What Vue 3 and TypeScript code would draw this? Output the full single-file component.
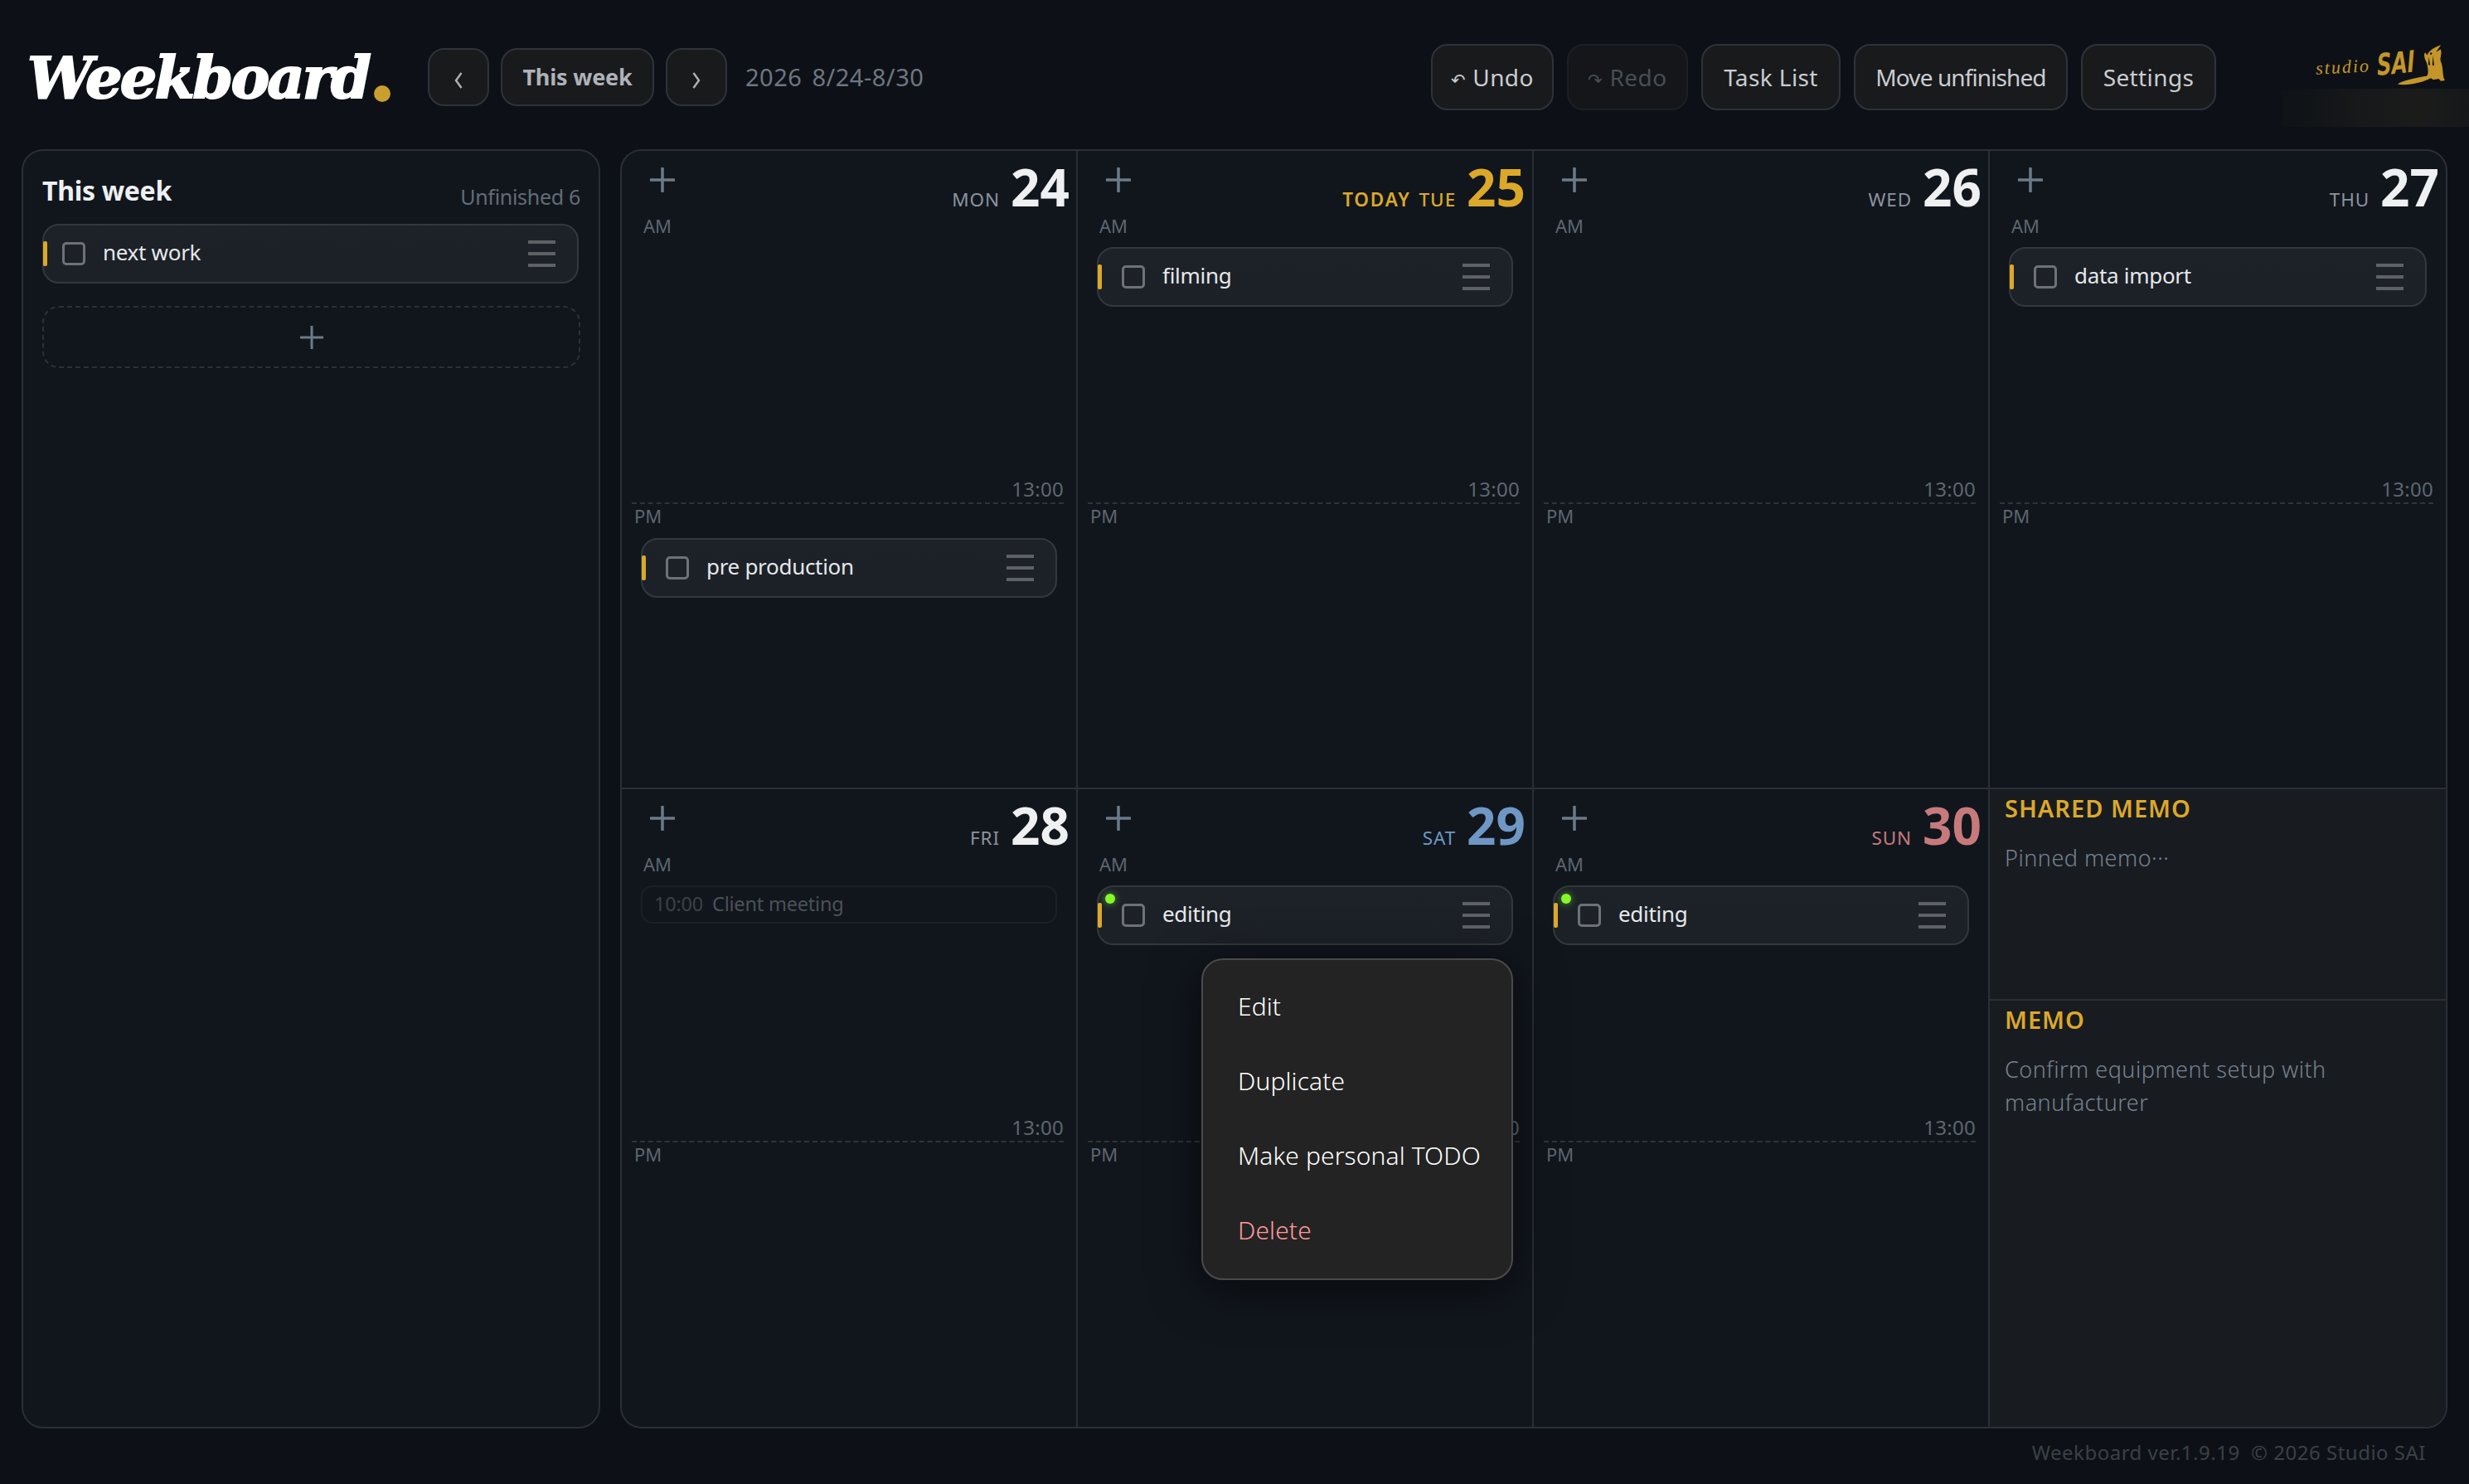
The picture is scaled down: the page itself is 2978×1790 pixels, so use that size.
<script setup lang="ts">
interface Task {
  title: string
  shared?: boolean
}
interface Day {
  dow: string
  num: number
  tone?: 'is-today' | 'sat' | 'sun'
  am: Task[]
  pm: Task[]
  event?: { time: string; title: string }
  menu?: boolean
}

const days: Day[] = [
  { dow: 'MON', num: 24, am: [], pm: [{ title: 'pre production' }] },
  { dow: 'TUE', num: 25, tone: 'is-today', am: [{ title: 'filming' }], pm: [] },
  { dow: 'WED', num: 26, am: [], pm: [] },
  { dow: 'THU', num: 27, am: [{ title: 'data import' }], pm: [] },
  { dow: 'FRI', num: 28, am: [], pm: [], event: { time: '10:00', title: 'Client meeting' } },
  { dow: 'SAT', num: 29, tone: 'sat', am: [{ title: 'editing', shared: true }], pm: [], menu: true },
  { dow: 'SUN', num: 30, tone: 'sun', am: [{ title: 'editing', shared: true }], pm: [] },
]

const menuItems = ['Edit', 'Duplicate', 'Make personal TODO']
</script>

<template>
  <div class="app">
    <header class="topbar">
      <div class="wordmark">Weekboard<i class="wordmark-dot"></i></div>
      <button type="button" class="btn btn-nav" aria-label="Previous week">
        <svg width="10" height="20" viewBox="0 0 10 20"><path d="M8.5 1L2 10l6.5 9" fill="none" stroke="currentColor" stroke-width="2.4" /></svg>
      </button>
      <button type="button" class="btn btn-nav btn-current">This week</button>
      <button type="button" class="btn btn-nav" aria-label="Next week">
        <svg width="10" height="20" viewBox="0 0 10 20"><path d="M1.5 1L8 10l-6.5 9" fill="none" stroke="currentColor" stroke-width="2.4" /></svg>
      </button>
      <span class="range">2026 8/24-8/30</span>

      <div class="actions">
        <button type="button" class="btn btn-undo"><span class="arrow">↶</span> Undo</button>
        <button type="button" class="btn btn-redo"><span class="arrow">↷</span> Redo</button>
        <button type="button" class="btn btn-list">Task List</button>
        <button type="button" class="btn btn-move">Move unfinished</button>
        <button type="button" class="btn btn-settings">Settings</button>
      </div>

      <div class="studio">
        <div class="studio-mark">
          <span class="studio-small">studio</span>
          <span class="studio-big">SAI</span>
          <svg class="studio-animal" viewBox="385 92 182 158" width="59" height="51">
            <path fill="#c4962a" d="M388 243C398 230 440 222 497 211C505 205 500 172 495 160C488 146 484 132 490 124L498 134C502 122 515 108 549 96C541 108 536 116 531 122L548 112C555 126 545 140 548 156C560 180 553 212 564 228L549 231L541 222L521 226L512 220C480 236 430 249 388 243Z" />
            <path fill="#0d1117" d="M504 140l5 32-7-2zM520 136l4 38-7-4zM512 124a4 4 0 1 0 .1 0z" />
          </svg>
        </div>
        <div class="studio-glow"></div>
      </div>
    </header>

    <main class="content">
      <aside class="side">
        <div class="side-head">
          <h2>This week</h2>
          <span>Unfinished 6</span>
        </div>
        <div class="task task-side">
          <i class="task-bar"></i>
          <i class="task-check"></i>
          <span class="task-title">next work</span>
          <i class="task-grip"><b></b><b></b><b></b></i>
        </div>
        <div class="side-add">
          <svg width="30" height="30" viewBox="0 0 30 30"><path d="M15 1v28M1 15h28" stroke="currentColor" stroke-width="3" /></svg>
        </div>
      </aside>

      <section class="board">
        <div v-for="day in days" :key="day.num" class="cell" :class="day.tone">
          <div class="am">
            <div class="head">
              <svg class="add" width="30" height="30" viewBox="0 0 30 30"><path d="M15 1v28M1 15h28" stroke="currentColor" stroke-width="3.5" stroke-linecap="round" /></svg>
              <div class="date">
                <span v-if="day.tone === 'is-today'" class="today">TODAY</span>
                <span class="dow">{{ day.dow }}</span>
                <span class="num">{{ day.num }}</span>
              </div>
            </div>
            <div class="period period-am">AM</div>
            <div class="tasks">
              <div v-if="day.event" class="event"><em>{{ day.event.time }}</em> {{ day.event.title }}</div>
              <div v-for="task in day.am" :key="task.title" class="task">
                <i v-if="task.shared" class="task-dot"></i>
                <i class="task-bar"></i>
                <i class="task-check"></i>
                <span class="task-title">{{ task.title }}</span>
                <i class="task-grip"><b></b><b></b><b></b></i>
              </div>
            </div>
            <div class="noon">13:00</div>
          </div>
          <div class="period period-pm">PM</div>
          <div class="tasks tasks-pm">
            <div v-for="task in day.pm" :key="task.title" class="task">
              <i class="task-bar"></i>
              <i class="task-check"></i>
              <span class="task-title">{{ task.title }}</span>
              <i class="task-grip"><b></b><b></b><b></b></i>
            </div>
          </div>

          <div v-if="day.menu" class="menu">
            <div v-for="item in menuItems" :key="item" class="menu-item">{{ item }}</div>
            <div class="menu-item menu-danger">Delete</div>
          </div>
        </div>

        <div class="cell memos">
          <div class="memo memo-shared">
            <h3>SHARED MEMO</h3>
            <p>Pinned memo···</p>
          </div>
          <div class="memo">
            <h3>MEMO</h3>
            <p>Confirm equipment setup with manufacturer</p>
          </div>
        </div>
      </section>
    </main>

    <footer class="foot">Weekboard ver.1.9.19&nbsp; © 2026 Studio SAI</footer>
  </div>
</template>

<style>
html, body { margin: 0; background: #0d1117; }
</style>

<style scoped>
.app {
  width: 2978px; height: 1790px; overflow: hidden;
  display: flex; flex-direction: column;
  background: #0d1117; color: #c9d1d9;
  font-family: "Noto Sans", sans-serif;
}
.app i { display: block; font-style: normal; }

/* top bar */
.topbar {
  height: 180px; flex-shrink: 0;
  display: flex; align-items: center;
  padding: 0 0 0 33px; box-sizing: border-box;
}
.wordmark {
  display: flex; align-items: flex-end;
  width: 483px; height: 74px; margin-top: 8px;
  font-family: "DejaVu Serif", serif; font-weight: 700; font-style: italic;
  font-size: 70px; line-height: 74px; letter-spacing: -2.8px;
  color: #fff; -webkit-text-stroke: 2px #fff;
}
.app .wordmark-dot {
  width: 20px; height: 20px; border-radius: 50%;
  background: #c99f2e; margin: 0 0 8px 6px;
}
.btn {
  height: 80px; padding: 0; box-sizing: border-box;
  background: #191a1c; color: #c9cdd2;
  border: 2px solid #2e333a; border-radius: 20px;
  font: 400 28px "Noto Sans", sans-serif; letter-spacing: .4px;
}
.btn-nav {
  width: 74px; height: 70px; margin: 5px 14px 0 0;
  color: #aeb3b9;
  display: flex; align-items: center; justify-content: center;
}
.btn-nav svg { margin-top: 8px; }
.btn-current { width: 185px; font-size: 27px; font-weight: 700; letter-spacing: -.2px; }
.range { font-size: 29px; letter-spacing: .5px; word-spacing: 4px; color: #6e7681; margin: 5px 0 0 8px; }
.actions { display: flex; gap: 16px; margin: 6px 0 0 auto; }
.arrow { font-size: 21px; }
.btn-undo { width: 148px; }
.btn-redo { width: 146px; background: #141619; border-color: #1c2025; color: #484e55; }
.btn-list { width: 168px; }
.btn-move { width: 258px; letter-spacing: -.9px; }
.btn-settings { width: 163px; }

.studio { width: 226px; margin-left: 79px; height: 153px; align-self: flex-start; display: flex; flex-direction: column; }
.studio-mark {
  height: 107px; box-sizing: border-box; padding: 50px 0 0 41px;
  display: flex; align-items: center; gap: 8px;
  color: #c4962a;
}
.studio-small { font: italic 400 22px "Liberation Serif", serif; letter-spacing: 2px; transform: rotate(-3deg) translateY(2px); }
.studio-big { font: italic 700 36px "DejaVu Sans", sans-serif; transform: scaleX(.68) rotate(-4deg); transform-origin: left; width: 50px; }
.studio-animal { margin-left: -34px; flex-shrink: 0; }
.studio-glow {
  flex: 1;
  background: linear-gradient(90deg, #0f1216 0, #16181a 40%, #1b1c1a 75%, #15171a 100%);
}

/* main */
.content {
  height: 1543px; flex-shrink: 0;
  display: flex; gap: 24px; padding: 0 26px;
}
.side {
  width: 698px; flex-shrink: 0; box-sizing: border-box;
  background: #11161d; border: 2px solid #2a2f36; border-radius: 26px;
  padding: 0 22px 0 23px;
}
.side-head { height: 88px; display: flex; justify-content: space-between; align-items: flex-end; }
.side-head h2 { margin: 0 0 16px; font-size: 32px; line-height: 48px; font-weight: 700; letter-spacing: -.3px; color: #eef0f2; }
.side-head span { font-size: 25px; line-height: 36px; letter-spacing: -.3px; color: #636c76; margin-bottom: 15px; }
.task-side { width: 647px; height: 73px; }
.side-add {
  height: 75px; margin-top: 27px; box-sizing: border-box;
  border: 2px dashed #2c3138; border-radius: 20px;
  display: flex; align-items: center; justify-content: center;
  color: #6d7a88;
}

.board {
  flex: 1; min-width: 0;
  display: grid; grid-template-columns: repeat(4, minmax(0, 1fr)); grid-template-rows: 770px 1fr;
  background: #11161d; border: 2px solid #2a2f36; border-radius: 26px;
  position: relative; overflow: hidden;
}
.cell {
  position: relative; box-sizing: border-box;
  border-right: 2px solid #2a2f36; border-bottom: 2px solid #2a2f36;
  display: flex; flex-direction: column;
}
.cell:nth-child(4n) { border-right: 0; }
.cell:nth-child(n+5) { border-bottom: 0; }
.am { height: 426px; flex-shrink: 0; display: flex; flex-direction: column; }
.head { height: 76px; flex-shrink: 0; display: flex; justify-content: space-between; align-items: flex-start; padding: 0 8px 0 34px; }
.add { margin-top: 20px; color: #6d7a88; }
.date { display: flex; align-items: baseline; gap: 13px; margin-top: 12px; color: #eef0f2; }
.dow { font-size: 22.5px; letter-spacing: .9px; color: #8b949e; }
.today { font-size: 22.5px; font-weight: 600; letter-spacing: 1.8px; color: #dca82a; margin-right: -3px; }
.num { font-size: 62px; line-height: 62px; font-weight: 700; }
.is-today .dow { color: #dca82a; font-weight: 500; }
.is-today .num { color: #dca82a; }
.sat .dow, .sat .num { color: #6f97c4; }
.sun .dow, .sun .num { color: #c67a7c; }
.period { font-size: 22px; line-height: 28px; color: #5d6670; flex-shrink: 0; }
.period-am { padding-left: 26px; }
.period-pm { padding-left: 15px; height: 30px; line-height: 28px; }
.tasks { padding: 12px 23px 0 23px; }
.tasks-pm { padding-top: 11px; }
.noon {
  margin: auto 15px 0 12px;
  text-align: right; font-size: 24px; line-height: 32px; letter-spacing: .3px; color: #5d6670;
  border-bottom: 2px dashed #2f343a;
}

.task {
  position: relative; height: 72px; box-sizing: border-box;
  display: flex; align-items: center;
  background: linear-gradient(180deg, #1d2229, #1c2127);
  border: 2px solid #33383e; border-radius: 20px;
}
.app .task-bar { width: 5px; height: 30px; margin-left: -1px; border-radius: 2px; background: #dca82a; }
.app .task-check {
  width: 28px; height: 28px; box-sizing: border-box; margin-left: 24px;
  border: 3px solid #6e7276; border-radius: 5px;
}
.task-title { margin: -4px 0 0 21px; font-size: 26px; letter-spacing: -.3px; color: #e6e8ea; flex: 1; }
.task-side .task-check { margin-left: 18px; }
.app .task-grip { width: 33px; margin-right: 26px; display: flex; flex-direction: column; gap: 10px; }
.task-grip b { display: block; height: 4px; background: #5e6266; }
.app .task-dot {
  position: absolute; left: 8px; top: 8px;
  width: 12px; height: 12px; border-radius: 50%;
  background: #84f82c; box-shadow: 0 0 8px rgba(132, 248, 44, .6);
}
.event {
  height: 46px; box-sizing: border-box; padding-left: 14px;
  border: 2px solid #1b2026; border-radius: 14px;
  font-size: 23.5px; line-height: 40px; letter-spacing: -.2px; color: #4b5158;
}
.event em { font-style: normal; color: #3b4147; margin-right: 5px; }

.menu {
  position: absolute; z-index: 3; left: 149px; top: 204px;
  width: 376px; box-sizing: border-box; padding: 12px 0;
  background: #232323; border: 2px solid #4a4a4b; border-radius: 26px;
  box-shadow: 0 10px 60px rgba(0, 0, 0, .55);
}
.menu-item { height: 90px; line-height: 88px; padding-left: 42px; font-size: 30px; font-weight: 300; letter-spacing: .1px; color: #fff; }
.menu-danger { color: #ff9a9c; }

.memos { background: #181c21; }
.memo { flex: 1; padding: 0 16px 0 18px; }
.memo-shared { flex: 0 0 255px; box-sizing: border-box; border-bottom: 2px solid #2a2f36; }
.memo h3 { margin: 0; padding-top: 3px; font-size: 29px; line-height: 40px; font-weight: 600; letter-spacing: 1px; color: #dca82a; }
.memo p { margin: 20px 0 0; font-size: 27px; line-height: 40px; font-weight: 300; letter-spacing: .5px; color: #76828f; }

.foot {
  flex: 1; padding: 12px 52px 0 0;
  text-align: right; font-size: 24px; line-height: 34px; letter-spacing: .5px; color: #3b4046;
}
</style>
